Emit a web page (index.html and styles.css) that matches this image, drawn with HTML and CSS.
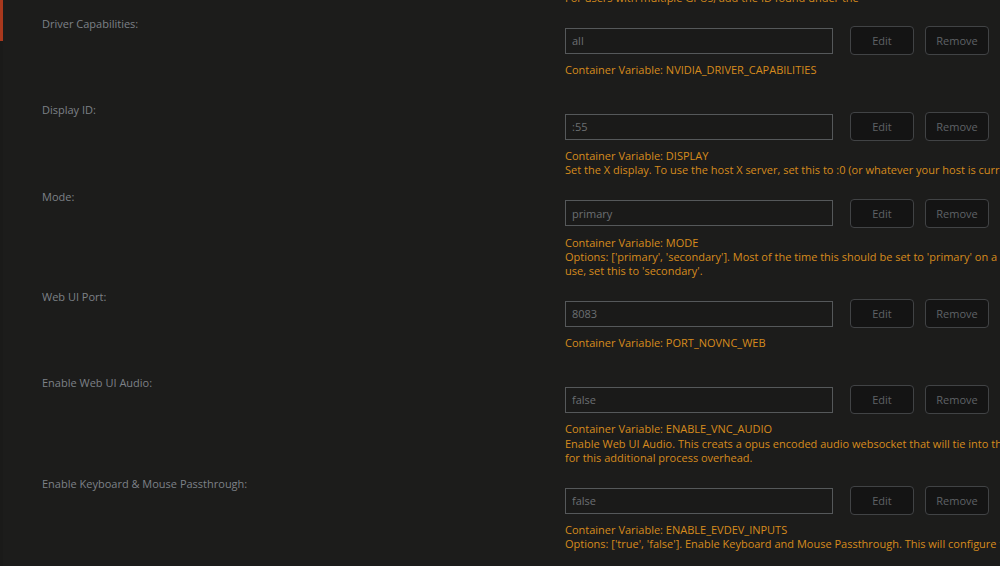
FILE: index.html
```html
<html>
    <head>
        <link rel="stylesheet" href="styles.css">
        <title>Docker - Edit Container</title>
    </head>
    <body>
        <div class="page">
            <div class="rail"><div class="rail-mark"></div></div>
            <div class="settings">
                <div class="row">
                    <div class="label">Nvidia Visible Devices:</div>
                    <div class="value">
                        <div class="field">
                            <input type="text" value="all">
                            <a class="button edit">Edit</a>
                            <a class="button">Remove</a>
                        </div>
                        <div class="info">Container Variable: NVIDIA_VISIBLE_DEVICES<br>For users with multiple GPUs, add the ID found under the</div>
                    </div>
                </div>
                <div class="row">
                    <div class="label">Driver Capabilities:</div>
                    <div class="value">
                        <div class="field">
                            <input type="text" value="all">
                            <a class="button edit">Edit</a>
                            <a class="button">Remove</a>
                        </div>
                        <div class="info">Container Variable: NVIDIA_DRIVER_CAPABILITIES</div>
                    </div>
                </div>
                <div class="row">
                    <div class="label">Display ID:</div>
                    <div class="value">
                        <div class="field">
                            <input type="text" value=":55">
                            <a class="button edit">Edit</a>
                            <a class="button">Remove</a>
                        </div>
                        <div class="info">Container Variable: DISPLAY<br>Set the X display. To use the host X server, set this to :0 (or whatever your host is currently using).</div>
                    </div>
                </div>
                <div class="row">
                    <div class="label">Mode:</div>
                    <div class="value">
                        <div class="field">
                            <input type="text" value="primary">
                            <a class="button edit">Edit</a>
                            <a class="button">Remove</a>
                        </div>
                        <div class="info">Container Variable: MODE<br>Options: ['primary', 'secondary']. Most of the time this should be set to 'primary' on a headless host. If the host X server is already in<br>use, set this to 'secondary'.</div>
                    </div>
                </div>
                <div class="row">
                    <div class="label">Web UI Port:</div>
                    <div class="value">
                        <div class="field">
                            <input type="text" value="8083">
                            <a class="button edit">Edit</a>
                            <a class="button">Remove</a>
                        </div>
                        <div class="info">Container Variable: PORT_NOVNC_WEB</div>
                    </div>
                </div>
                <div class="row">
                    <div class="label">Enable Web UI Audio:</div>
                    <div class="value">
                        <div class="field">
                            <input type="text" value="false">
                            <a class="button edit">Edit</a>
                            <a class="button">Remove</a>
                        </div>
                        <div class="info">Container Variable: ENABLE_VNC_AUDIO<br>Enable Web UI Audio. This creats a opus encoded audio websocket that will tie into the Web UI. Disable this if you do not wish<br>for this additional process overhead.</div>
                    </div>
                </div>
                <div class="row">
                    <div class="label">Enable Keyboard &amp; Mouse Passthrough:</div>
                    <div class="value">
                        <div class="field">
                            <input type="text" value="false">
                            <a class="button edit">Edit</a>
                            <a class="button">Remove</a>
                        </div>
                        <div class="info">Container Variable: ENABLE_EVDEV_INPUTS<br>Options: ['true', 'false']. Enable Keyboard and Mouse Passthrough. This will configure the container to pass input devices through.</div>
                    </div>
                </div>
            </div>
        </div>
    </body>
</html>
```

FILE: styles.css
```css
body {
    margin: 0;
    background-color: #1c1c1b;
    font-family: "Open Sans", "DejaVu Sans", sans-serif;
    font-size: 11px;
    overflow: hidden;
}
.page {
    display: flex;
    height: 566px;
}
.rail {
    width: 3px;
    flex: none;
    background-color: #1a1a19;
}
.rail-mark {
    height: 41px;
    background-color: #a8381d;
}
.settings {
    flex: 1;
    margin-top: -75.5px;
    padding-left: 39px;
}
.row {
    display: grid;
    grid-template-columns: 523px 1fr;
    padding: 6px 0;
}
.label {
    line-height: 14.5px;
    color: #7d8187;
}
.value {
    padding-top: 9px;
}
.field {
    display: flex;
    align-items: center;
}
.field input {
    width: 268px;
    height: 26px;
    box-sizing: border-box;
    padding: 0 6px;
    background-color: #1a1a19;
    border: 1px solid #55585a;
    border-radius: 0;
    color: #6c6f72;
    font-family: inherit;
    font-size: 11px;
}
.button {
    width: 64px;
    height: 29px;
    box-sizing: border-box;
    margin-left: 11px;
    display: flex;
    align-items: center;
    justify-content: center;
    background-color: #141414;
    border: 1px solid #414345;
    border-radius: 4px;
    color: #5f6266;
}
.button.edit {
    margin-left: 17px;
}
.info {
    margin-top: 8px;
    min-height: 28px;
    line-height: 14.25px;
    color: #d68b1d;
    white-space: nowrap;
}
```
